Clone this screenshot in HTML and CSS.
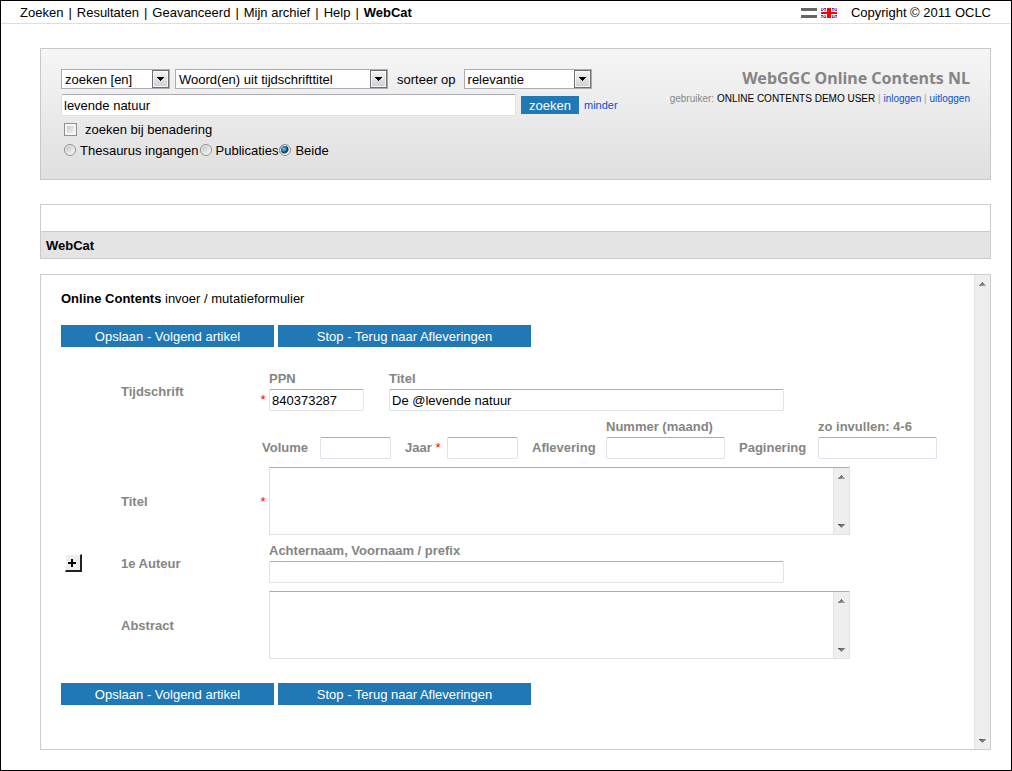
FILE: index.html
```html
<!DOCTYPE html>
<html lang="nl">
<head>
<meta charset="utf-8">
<title>WebGGC Online Contents NL</title>
<link rel="stylesheet" href="styles.css">
</head>
<body>
<svg class="defs" width="0" height="0" aria-hidden="true">
  <defs>
    <linearGradient id="shade" x1="0" y1="0" x2="1" y2="1"><stop offset="0" stop-color="#444"/><stop offset="1" stop-color="#bbb"/></linearGradient>
    <symbol id="up" viewBox="0 0 7 4"><path d="M3 0h1v1h1v1h1v1h1v1H0V3h1V2h1V1h1z" fill="url(#shade)"/></symbol>
    <symbol id="down" viewBox="0 0 7 4"><path d="M0 0h7v1H6v1H5v1H4v1H3V3H2V2H1V1H0z" fill="url(#shade)"/></symbol>
    <symbol id="drop" viewBox="0 0 7 4"><path d="M0 0h7v1H6v1H5v1H4v1H3V3H2V2H1V1H0z" fill="#000"/></symbol>
  </defs>
</svg>
<header class="topbar">
  <nav class="menu">
    <a href="#">Zoeken</a><span class="bar">|</span>
    <a href="#">Resultaten</a><span class="bar">|</span>
    <a href="#">Geavanceerd</a><span class="bar">|</span>
    <a href="#">Mijn archief</a><span class="bar">|</span>
    <a href="#">Help</a><span class="bar">|</span>
    <a href="#" class="current">WebCat</a>
  </nav>
  <div class="meta">
    <a href="#" class="flag" aria-label="Nederlands"><svg width="16" height="10" viewBox="0 0 16 10"><path d="M0 0h16v3H0zM0 7h16v3H0z" fill="#666"/><path d="M0 3h16v4H0z" fill="#fff"/></svg></a>
    <a href="#" class="flag" aria-label="English"><svg width="16" height="10" viewBox="0 0 16 10"><path d="M0 0h16v10H0z" fill="#3333e0"/><path d="M0 0l16 10M16 0L0 10" stroke="#fff" stroke-width="2"/><path d="M0 0l16 10M16 0L0 10" stroke="#ff3344" stroke-width="1"/><path d="M5 0h6v10H5zM0 3h16v4H0z" fill="#fff"/><path d="M6 0h4v10H6zM0 4h16v2H0z" fill="#f00"/></svg></a>
    <span class="copyright">Copyright © 2011 OCLC</span>
  </div>
</header>
<div class="content">
  <section class="search">
    <form class="search-form">
      <div class="row">
        <span class="picker picker-action"><select aria-label="Actie"><option>zoeken [en]</option></select><span class="picker-button"><svg width="7" height="4"><use href="#drop"/></svg></span></span>
        <span class="picker picker-index"><select aria-label="Index"><option>Woord(en) uit tijdschrifttitel</option></select><span class="picker-button"><svg width="7" height="4"><use href="#drop"/></svg></span></span>
        <label class="sort-label" for="sort">sorteer op</label>
        <span class="picker picker-sort"><select id="sort"><option>relevantie</option></select><span class="picker-button"><svg width="7" height="4"><use href="#drop"/></svg></span></span>
      </div>
      <div class="row">
        <input class="field query" type="text" value="levende natuur" aria-label="Zoekterm">
        <button class="button go" type="button">zoeken</button>
        <a href="#" class="small-link">minder</a>
      </div>
      <div class="row options">
        <label class="choice choice-box"><input class="check" type="checkbox">zoeken bij benadering</label>
      </div>
      <div class="row options">
        <label class="choice"><input class="radio" type="radio" name="scope">Thesaurus ingangen</label>
        <label class="choice"><input class="radio" type="radio" name="scope">Publicaties</label>
        <label class="choice"><input class="radio" type="radio" name="scope" checked>Beide</label>
      </div>
    </form>
    <div class="account">
      <h1 class="brand">WebGGC Online Contents NL</h1>
      <p class="user">gebruiker: <span class="user-name">ONLINE CONTENTS DEMO USER</span> <span class="divider">|</span> <a href="#">inloggen</a> <span class="divider">|</span> <a href="#">uitloggen</a></p>
    </div>
  </section>
  <section class="title-box">
    <div class="title-blank"></div>
    <h2 class="title">WebCat</h2>
  </section>
  <main class="panel">
    <form class="entry">
      <p class="entry-title"><strong>Online Contents</strong> invoer / mutatieformulier</p>
      <div class="actions">
        <button class="button save" type="button">Opslaan - Volgend artikel</button>
        <button class="button stop" type="button">Stop - Terug naar Afleveringen</button>
      </div>
      <div class="fields">
        <span class="name">Tijdschrift</span>
        <span class="required required-low">*</span>
        <div class="journal">
          <label class="stack ppn">PPN<input class="field" type="text" value="840373287"></label>
          <label class="stack long">Titel<input class="field" type="text" value="De @levende natuur"></label>
        </div>
        <div class="issue">
          <label class="inline" for="volume">Volume</label><input id="volume" class="field short" type="text">
          <label class="inline" for="year">Jaar <span class="star">*</span></label><input id="year" class="field short" type="text">
          <label class="inline" for="number">Aflevering</label><label class="stack medium">Nummer (maand)<input id="number" class="field" type="text"></label>
          <label class="inline" for="pages">Paginering</label><label class="stack medium">zo invullen: 4-6<input id="pages" class="field" type="text"></label>
        </div>
        <label class="name" for="title">Titel</label>
        <span class="required">*</span>
        <div class="memo cell"><textarea id="title"></textarea><span class="scroll"><svg width="7" height="4"><use href="#up"/></svg><svg width="7" height="4"><use href="#down"/></svg></span></div>
        <button class="plus" type="button" aria-label="Auteur toevoegen"><svg width="17" height="18" viewBox="0 0 17 18"><path d="M1 1h14v15H1z" fill="#eee"/><path d="M15 1l2-1v18H0l1-2h14z" fill="#222"/><path d="M6 5h2v3h3v2H8v3H6v-3H3V8h3z" fill="#000"/></svg></button>
        <span class="name">1e Auteur</span>
        <div class="cell"><label class="stack author">Achternaam, Voornaam / prefix<input class="field" type="text"></label></div>
        <label class="name" for="abstract">Abstract</label>
        <div class="memo cell"><textarea id="abstract"></textarea><span class="scroll"><svg width="7" height="4"><use href="#up"/></svg><svg width="7" height="4"><use href="#down"/></svg></span></div>
      </div>
      <div class="actions">
        <button class="button save" type="button">Opslaan - Volgend artikel</button>
        <button class="button stop" type="button">Stop - Terug naar Afleveringen</button>
      </div>
    </form>
    <span class="scroll"><svg width="7" height="4"><use href="#up"/></svg><svg width="7" height="4"><use href="#down"/></svg></span>
  </main>
</div>
</body>
</html>
```
FILE: styles.css
```css
* { box-sizing: border-box; }

body {
  margin: 0;
  min-height: 100vh;
  display: flex;
  flex-direction: column;
  border: 1px solid #000;
  background: #fff;
  color: #000;
  font: 13px/15px "Liberation Sans", Arial, sans-serif;
}

h1, h2, p { margin: 0; }
input, select, textarea, button { font: inherit; color: inherit; margin: 0; }
a { color: #0b4fd0; text-decoration: none; }
svg { display: block; }
.defs { position: absolute; }

.topbar {
  display: flex;
  justify-content: space-between;
  align-items: center;
  height: 23px;
  padding: 0 20px 0 19px;
  border-bottom: 1px solid #ddd;
}
.menu { display: flex; gap: 5px; }
.menu a { color: #000; }
.menu .current { font-weight: bold; }
.meta { display: flex; align-items: center; gap: 4px; }
.flag { padding-top: 2px; }
.copyright { margin-left: 10px; }

.content {
  flex: 1;
  display: flex;
  flex-direction: column;
  padding: 24px 20px 20px 39px;
}

.search {
  display: flex;
  justify-content: space-between;
  align-items: flex-start;
  min-height: 132px;
  padding: 20px;
  border: 1px solid #c8c8c8;
  background: linear-gradient(#f6f6f6, #dfdfdf);
}
.search-form { display: flex; flex-direction: column; gap: 5px; }
.row { display: flex; align-items: center; gap: 5px; }
.options { gap: 1px; height: 16px; padding-left: 3px; }

.picker { position: relative; display: flex; height: 20px; }
.picker select {
  appearance: none;
  width: 100%;
  padding: 0 20px 0 3px;
  border: 1px solid #abadb3;
  border-radius: 0;
  background: #fff;
}
.picker-button {
  position: absolute;
  top: 1px;
  right: 1px;
  bottom: 1px;
  width: 17px;
  display: grid;
  place-items: center;
  border: 1px solid #707070;
  background: linear-gradient(#f3f3f3, #d0d0d0);
  box-shadow: inset 0 0 0 1px #f8f8f8;
  pointer-events: none;
}
.picker-action { width: 109px; }
.picker-index { width: 213px; }
.picker-sort { width: 128px; }
.sort-label { padding: 0 3px 0 4px; }

.field {
  width: 100%;
  height: 22px;
  padding: 0 2px;
  border: 1px solid #dfe2ea;
  border-top-color: #abadb3;
  border-radius: 2px;
  background: #fff;
  color: #000;
  font-weight: normal;
}
.query { width: 455px; }

.button {
  height: 22px;
  padding: 0;
  border: 0;
  background: #2079b5;
  color: #fff;
}
.go { width: 58px; height: 18px; }
.small-link { font-size: 11px; }

.choice { display: flex; align-items: center; gap: 4px; }
.choice-box { gap: 8px; }
.check {
  appearance: none;
  width: 13px;
  height: 13px;
  border: 1px solid #8e8f8f;
  background: linear-gradient(135deg, #b8bcc4, #fff);
  box-shadow: inset 0 0 0 2px #f4f4f4;
}
.radio {
  appearance: none;
  width: 12px;
  height: 12px;
  border: 1px solid #8e8f8f;
  border-radius: 50%;
  background: linear-gradient(135deg, #b8bcc4, #fff);
  box-shadow: inset 0 0 0 1px #f4f4f4;
}
.radio:checked { background: radial-gradient(circle at 4px 4px, #7cd0f0, #155a88 3px, #10304c 4px, #e8eef2 5px); }

.account { padding-top: 1px; text-align: right; }
.brand { color: #858585; font: bold 16px/16px "Noto Sans", sans-serif; }
.user { margin-top: 5px; color: #888; font-size: 10px; }
.user-name { color: #000; }
.divider { color: #b8a48c; }

.title-box { margin-top: 24px; border: 1px solid #ccc; }
.title-blank { height: 26px; }
.title {
  padding: 6px 5px 5px;
  border-top: 1px solid #ccc;
  background: #e4e4e4;
  font-size: 13px;
}

.panel {
  flex: 1;
  display: flex;
  justify-content: space-between;
  margin-top: 15px;
  border: 1px solid #ccc;
}
.entry { flex: 1; padding: 16px 20px; }
.entry-title { margin-bottom: 19px; }
.actions { display: flex; gap: 4px; }
.save { width: 213px; }
.stop { width: 253px; }

.fields {
  display: grid;
  grid-template-columns: 60px 136px 12px 1fr;
  row-gap: 8px;
  align-items: center;
  margin: 24px 0;
  color: #858585;
  font-weight: bold;
}
.name { grid-column: 2; }
.required { grid-column: 3; color: #f00; font-weight: normal; text-align: center; }
.required-low { align-self: end; line-height: 22px; }
.star { color: #f00; font-weight: normal; }
.cell { grid-column: 4; }
.journal { grid-column: 4; display: flex; gap: 25px; }
.issue {
  grid-column: 3 / -1;
  display: grid;
  grid-template-columns: 58px 85px 42px 85px 74px 133px 79px 119px;
  align-items: end;
  padding-left: 5px;
}
.inline { line-height: 22px; white-space: nowrap; }
.stack { display: flex; flex-direction: column; gap: 3px; white-space: nowrap; }
.ppn { width: 95px; }
.long { width: 395px; }
.author { width: 515px; }
.short { width: 71px; }
.medium { width: 119px; }

.memo {
  display: flex;
  width: 581px;
  height: 68px;
  border: 1px solid #dfe2ea;
  border-top-color: #abadb3;
}
.memo textarea {
  flex: 1;
  padding: 2px;
  border: 0;
  background: #fff;
  color: #000;
  font-weight: normal;
  resize: none;
  overflow: hidden;
}
.scroll {
  display: flex;
  flex-direction: column;
  justify-content: space-between;
  align-items: center;
  width: 16px;
  padding: 7px 0 6px;
  border-left: 1px solid #e4e4e4;
  background: #eee;
}

.plus {
  grid-column: 1;
  width: 17px;
  height: 18px;
  margin-left: 4px;
  padding: 0;
  border: 0;
  background: none;
}
```
